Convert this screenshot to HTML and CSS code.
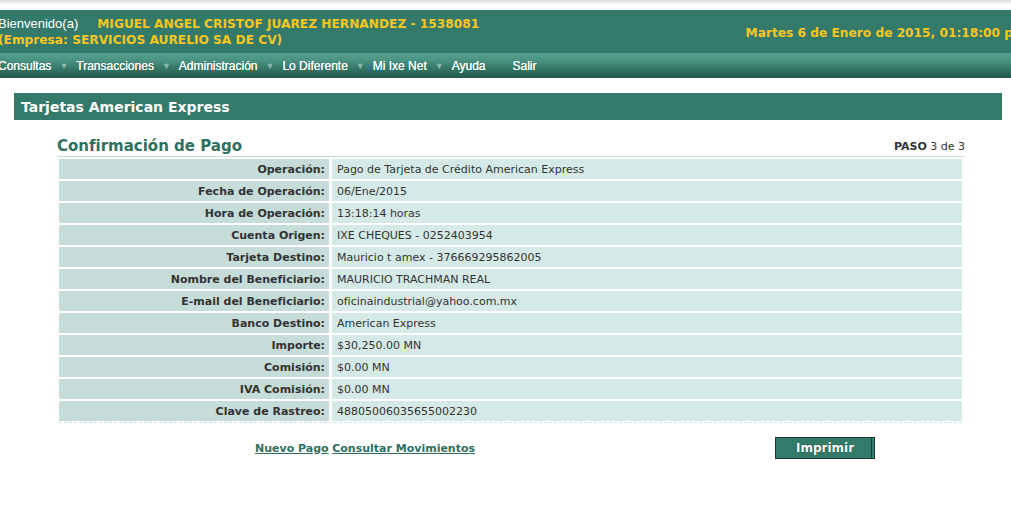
FILE: index.html
```html
<!DOCTYPE html>
<html lang="es">
<head>
<meta charset="utf-8">
<title>Tarjetas American Express</title>
<link rel="stylesheet" href="styles.css">
</head>
<body>
<div class="topstrip"></div>
<header class="header">
  <div class="header-top">
    <div class="welcome">
      <div class="line"><span class="hello">Bienvenido(a)</span><span class="user">MIGUEL ANGEL CRISTOF JUAREZ HERNANDEZ - 1538081</span></div>
      <div class="line company">(Empresa: SERVICIOS AURELIO SA DE CV)</div>
    </div>
    <div class="date">Martes 6 de Enero de 2015, 01:18:00 p.m.</div>
  </div>
  <nav class="menu">
    <span class="item">Consultas</span><span class="arrow">▼</span>
    <span class="item">Transacciones</span><span class="arrow">▼</span>
    <span class="item">Administración</span><span class="arrow">▼</span>
    <span class="item">Lo Diferente</span><span class="arrow">▼</span>
    <span class="item">Mi Ixe Net</span><span class="arrow">▼</span>
    <span class="item">Ayuda</span>
    <span class="item salir">Salir</span>
  </nav>
</header>

<section class="section">
  <h1 class="section-title">Tarjetas American Express</h1>
  <div class="content">
    <div class="heading">
      <h2>Confirmación de Pago</h2>
      <div class="step"><b>PASO</b> 3 de 3</div>
    </div>
    <div class="details">
      <div class="label">Operación:</div><div class="value">Pago de Tarjeta de Crédito American Express</div>
      <div class="label">Fecha de Operación:</div><div class="value">06/Ene/2015</div>
      <div class="label">Hora de Operación:</div><div class="value">13:18:14 horas</div>
      <div class="label">Cuenta Origen:</div><div class="value">IXE CHEQUES - 0252403954</div>
      <div class="label">Tarjeta Destino:</div><div class="value">Mauricio t amex - 376669295862005</div>
      <div class="label">Nombre del Beneficiario:</div><div class="value">MAURICIO TRACHMAN REAL</div>
      <div class="label">E-mail del Beneficiario:</div><div class="value">oficinaindustrial@yahoo.com.mx</div>
      <div class="label">Banco Destino:</div><div class="value">American Express</div>
      <div class="label">Importe:</div><div class="value">$30,250.00 MN</div>
      <div class="label">Comisión:</div><div class="value">$0.00 MN</div>
      <div class="label">IVA Comisión:</div><div class="value">$0.00 MN</div>
      <div class="label">Clave de Rastreo:</div><div class="value">48805006035655002230</div>
    </div>
    <div class="actions">
      <div class="links"><a href="#">Nuevo Pago</a> <a href="#">Consultar Movimientos</a></div>
      <button class="btn" type="button">Imprimir</button>
    </div>
  </div>
</section>
</body>
</html>
```
FILE: styles.css
```css
html, body {
  margin: 0;
  padding: 0;
  background: #ffffff;
  overflow: hidden;
}
body {
  font-family: "DejaVu Sans", Verdana, sans-serif;
  font-size: 11px;
  color: #333333;
}
.topstrip {
  height: 10px;
  background: linear-gradient(#d9d9d9 0, #f4f4f4 3px, #ffffff 5px);
}
.header {
  background: #337a6b;
}
.header-top {
  display: flex;
  align-items: center;
  height: 43px;
  margin-left: -2px;
}
.welcome .line {
  height: 16px;
  line-height: 16px;
  white-space: nowrap;
}
.welcome {
  padding-top: 1px;
}
.hello {
  font-family: "Liberation Sans", Arial, sans-serif;
  font-size: 13px;
  color: #ffffff;
  margin-right: 19px;
}
.user, .company, .date {
  font-family: "DejaVu Sans", Verdana, sans-serif;
  font-weight: bold;
  font-size: 12.2px;
  color: #f9c61e;
}
.date {
  white-space: nowrap;
  padding-top: 2px;
  margin-left: auto;
  margin-right: -24px;
}
.menu {
  height: 25px;
  display: flex;
  align-items: center;
  background: linear-gradient(#58a292 0, #48907f 8px, #2f6f5f 18px, #22594b 25px);
  font-family: "Liberation Sans", Arial, sans-serif;
  font-size: 12px;
  color: #ffffff;
  margin-left: -2px;
  white-space: nowrap;
}
.menu .item {
  text-shadow: 0 0 0.5px #ffffff;
}
.menu .arrow {
  font-size: 9px;
  color: #86b9ab;
  margin: 0 8px 0 8px;
}
.menu .salir {
  margin-left: 27px;
}
.section {
  padding: 15px 9px 0 14px;
}
.section-title {
  margin: 0;
  height: 27px;
  line-height: 28px;
  background: #337a6b;
  color: #ffffff;
  font-size: 14px;
  font-weight: bold;
  padding-left: 7px;
}
.content {
  margin: 0 37px 0 43px;
}
.heading {
  display: flex;
  justify-content: space-between;
  align-items: flex-end;
  height: 36px;
  border-bottom: 1px solid #cbdeda;
  margin-bottom: 2px;
}
.heading h2 {
  margin: 0;
  font-size: 15px;
  font-weight: bold;
  color: #2f6f60;
  line-height: 20px;
  padding-bottom: 0;
}
.step {
  font-size: 11px;
  color: #333333;
  padding-bottom: 3px;
}
.details {
  display: grid;
  grid-template-columns: 270px 1fr;
  column-gap: 3px;
  row-gap: 2px;
  margin: 0 3px 0 2px;
  padding-bottom: 1px;
  border-bottom: 1px dashed #d3e3df;
}
.label, .value {
  height: 20px;
  line-height: 21px;
  white-space: nowrap;
}
.label {
  background: #c5dcd8;
  font-weight: bold;
  text-align: right;
  padding-right: 4px;
}
.value {
  background: #d5eae6;
  padding-left: 5px;
}
.actions {
  display: flex;
  align-items: center;
  padding: 14px 90px 0 198px;
}
.links a {
  font-weight: bold;
  font-size: 11px;
  color: #2f6f60;
}
.btn {
  margin-left: auto;
  width: 100px;
  height: 22px;
  background: #337a6b;
  border: 1px solid #163c33;
  box-shadow: inset -2px 0 0 #337a6b, inset -3px 0 0 #163c33;
  color: #ffffff;
  font-family: "DejaVu Sans", Verdana, sans-serif;
  font-weight: bold;
  font-size: 12px;
  padding: 0;
  text-shadow: 0 0 1px #0d3028;
}
```
